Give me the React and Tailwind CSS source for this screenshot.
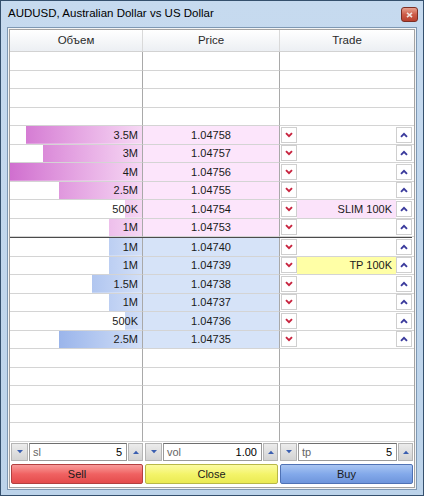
import React from "react";

const asks = [
  { vol: "3.5M", size: 3.5, price: "1.04758" },
  { vol: "3M", size: 3, price: "1.04757" },
  { vol: "4M", size: 4, price: "1.04756" },
  { vol: "2.5M", size: 2.5, price: "1.04755" },
  { vol: "500K", size: 0.5, price: "1.04754", order: { text: "SLIM 100K", tone: "bg-[#fbe3fa]" } },
  { vol: "1M", size: 1, price: "1.04753" },
];

const bids = [
  { vol: "1M", size: 1, price: "1.04740" },
  { vol: "1M", size: 1, price: "1.04739", order: { text: "TP 100K", tone: "bg-[#ffffa6]" } },
  { vol: "1.5M", size: 1.5, price: "1.04738" },
  { vol: "1M", size: 1, price: "1.04737" },
  { vol: "500K", size: 0.5, price: "1.04736" },
  { vol: "2.5M", size: 2.5, price: "1.04735" },
];

const MAX_SIZE = 4;
const BAR_WIDTH = 132;

const rowCls = "grid grid-cols-[133px_137px_134px] h-[18.5px]";
const cellCls = "border-b border-[#d4d4d4]";
const sepCls = "border-r border-r-[#a9a9a9]";

const ChevronDown = () => (
  <svg width="8" height="6" viewBox="0 0 8 6">
    <path d="M1 1.2 L4 4.2 L7 1.2" fill="none" stroke="#c8243f" strokeWidth="1.9" />
  </svg>
);

const ChevronUp = () => (
  <svg width="8" height="6" viewBox="0 0 8 6">
    <path d="M1 4.8 L4 1.8 L7 4.8" fill="none" stroke="#3a3a9c" strokeWidth="1.9" />
  </svg>
);

const TinyArrow = ({ up }) => (
  <svg width="6" height="4" viewBox="0 0 6 4">
    <path d={up ? "M0 4 L3 0.8 L6 4 Z" : "M0 0 L3 3.2 L6 0 Z"} fill="#3b5fb0" />
  </svg>
);

const CellButton = ({ children }) => (
  <div className="flex h-[16px] w-[16px] shrink-0 items-center justify-center border border-[#cfcfcf] bg-white">
    {children}
  </div>
);

const EmptyRow = () => (
  <div className={rowCls}>
    <div className={`${cellCls} ${sepCls}`} />
    <div className={`${cellCls} ${sepCls}`} />
    <div className={cellCls} />
  </div>
);

const BookRow = ({ row, side }) => {
  const bar =
    side === "ask"
      ? "from-[#d06fcf] to-[#f6d8f4]"
      : "from-[#7b9ce2] to-[#d2dff7]";
  const priceBg = side === "ask" ? "bg-[#fce5fb]" : "bg-[#d6e3f8]";
  const width = Math.round((row.size / MAX_SIZE) * BAR_WIDTH);

  return (
    <div className={rowCls}>
      <div className={`${cellCls} ${sepCls} relative`}>
        <div
          className={`absolute inset-y-0 right-0 bg-linear-to-r ${bar} bg-size-[132px_100%] bg-right`}
          style={{ width }}
        />
        <div className="relative flex h-full items-center justify-end pr-[4px]">{row.vol}</div>
      </div>
      <div className={`${cellCls} ${sepCls} ${priceBg} flex items-center justify-center`}>{row.price}</div>
      <div className={`${cellCls} flex items-center pl-px pr-[2px]`}>
        <CellButton>
          <ChevronDown />
        </CellButton>
        <div
          className={`flex h-full flex-1 items-center justify-end pr-[4px] ${row.order ? row.order.tone : ""}`}
        >
          {row.order ? row.order.text : ""}
        </div>
        <CellButton>
          <ChevronUp />
        </CellButton>
      </div>
    </div>
  );
};

const Spinner = ({ label, value }) => (
  <div className="flex h-[18px] items-stretch gap-px">
    <div className="flex w-[17px] items-center justify-center border border-[#b5b5b5] bg-linear-to-b from-[#ececec] to-[#d3d3d3]">
      <TinyArrow />
    </div>
    <div className="flex flex-1 items-center justify-between border border-[#9a9a9a] border-t-[#6e6e6e] bg-white pl-[3px] pr-[4px]">
      <span className="text-[#666]">{label}</span>
      <span className="text-black">{value}</span>
    </div>
    <div className="flex w-[15px] items-center justify-center border border-[#b5b5b5] bg-linear-to-b from-[#ececec] to-[#d3d3d3]">
      <TinyArrow up />
    </div>
  </div>
);

const ActionButton = ({ label, tone }) => (
  <div className={`flex h-[20px] items-center justify-center rounded-[2px] border ${tone}`}>{label}</div>
);

export default function App() {
  return (
    <div className="flex h-[496px] w-[424px] flex-col border border-[#35506d] bg-linear-to-b from-[#c6daef] to-[#bcd3ea] font-['Liberation_Sans',Arial,sans-serif] text-[11px] text-[#1a1a1a]">
      {/* caption */}
      <div className="flex h-[26px] shrink-0 items-center justify-between pl-[7px] pr-[5px]">
        <span className="text-[11.5px] text-black">AUDUSD, Australian Dollar vs US Dollar</span>
        <div className="mt-[1px] flex h-[15px] w-[17px] items-center justify-center rounded-[3px] border border-[#7d2e24] bg-linear-to-b from-[#e7a08f] via-[#cd5b48] to-[#b8402e]">
          <svg width="7" height="6" viewBox="0 0 7 6">
            <path d="M1 0.8 L6 5.2 M6 0.8 L1 5.2" stroke="#f1e4e0" strokeWidth="1.6" />
          </svg>
        </div>
      </div>

      {/* client area */}
      <div className="mx-[6px] h-[463px] border border-[#7e98b3] bg-[#f4f4f4] p-px">
        <div className="flex h-full flex-col border border-[#a3a3a3] bg-white">
          <div className="grid h-[22px] shrink-0 grid-cols-[133px_137px_134px] border-b border-[#d2d2d2] bg-linear-to-b from-white to-[#eceff3] text-[11.5px] text-[#2a2a2a]">
            <div className="flex items-center justify-center border-r border-[#d9d9d9]">Объем</div>
            <div className="flex items-center justify-center border-r border-[#d9d9d9]">Price</div>
            <div className="flex items-center justify-center">Trade</div>
          </div>

          {[0, 1, 2, 3].map((i) => (
            <EmptyRow key={`top-${i}`} />
          ))}
          {asks.map((row) => (
            <BookRow key={row.price} row={row} side="ask" />
          ))}
          <div className="mr-[2px] h-px shrink-0 bg-[#4b4b4b]" />
          {bids.map((row) => (
            <BookRow key={row.price} row={row} side="bid" />
          ))}
          {[0, 1, 2, 3, 4].map((i) => (
            <EmptyRow key={`bottom-${i}`} />
          ))}

          <div className="mt-auto grid grid-cols-[133px_137px_134px] pb-[3px]">
            <div className="flex flex-col gap-[3px] pl-px">
              <Spinner label="sl" value="5" />
              <ActionButton label="Sell" tone="border-[#b34040] bg-linear-to-b from-[#f79a9a] via-[#f06262] to-[#e44b4b]" />
            </div>
            <div className="flex flex-col gap-[3px] px-[2px]">
              <Spinner label="vol" value="1.00" />
              <ActionButton label="Close" tone="border-[#b8b848] bg-linear-to-b from-[#fbfba0] via-[#f4f46a] to-[#eaea52]" />
            </div>
            <div className="flex flex-col gap-[3px] pr-px">
              <Spinner label="tp" value="5" />
              <ActionButton label="Buy" tone="border-[#4f72b5] bg-linear-to-b from-[#a9c5f2] via-[#83a9ea] to-[#6e95dc]" />
            </div>
          </div>
        </div>
      </div>
    </div>
  );
}
